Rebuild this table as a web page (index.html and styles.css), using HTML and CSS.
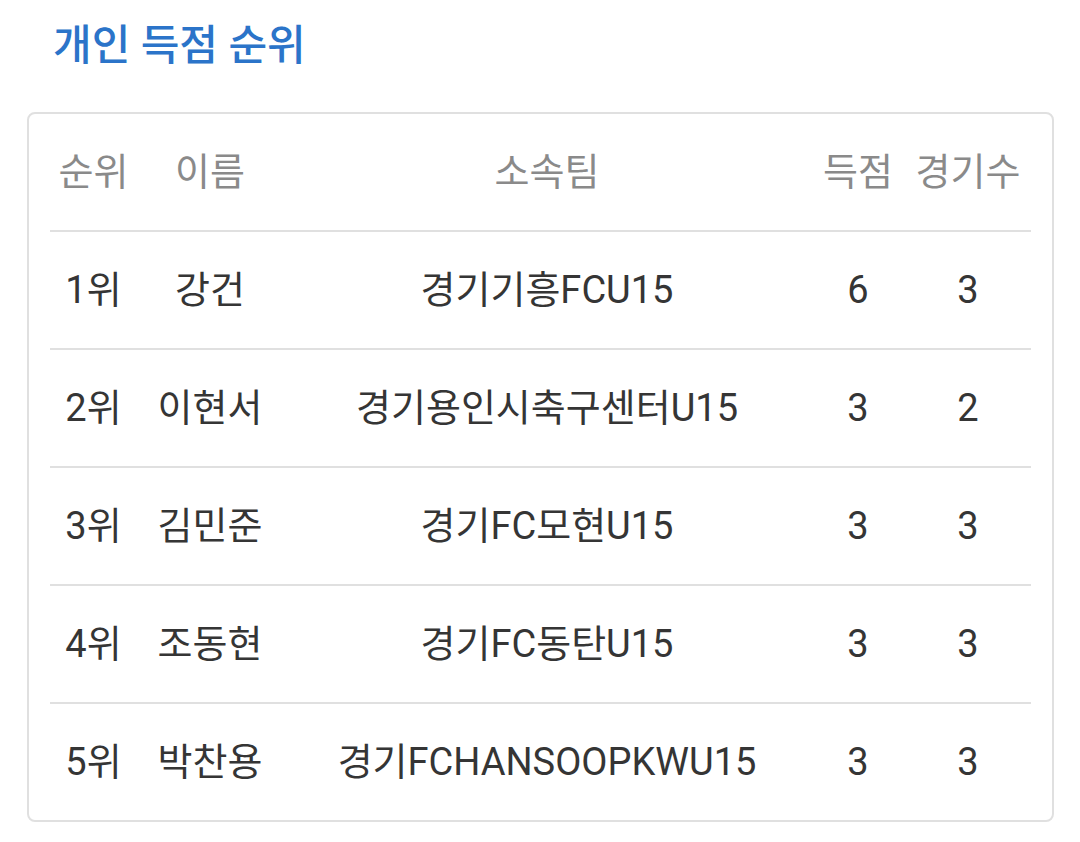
FILE: index.html
```html
<!DOCTYPE html>
<html lang="ko">
<head>
<meta charset="utf-8">
<title>개인 득점 순위</title>
<link rel="stylesheet" href="styles.css">
</head>
<body>
<h1 class="title">개인 득점 순위</h1>
<div class="card">
  <table class="rank-table">
    <colgroup>
      <col class="c-rank"><col class="c-name"><col class="c-team"><col class="c-goal"><col class="c-games">
    </colgroup>
    <thead>
      <tr><th>순위</th><th>이름</th><th>소속팀</th><th>득점</th><th>경기수</th></tr>
    </thead>
    <tbody>
      <tr><td>1위</td><td>강건</td><td>경기기흥FCU15</td><td>6</td><td>3</td></tr>
      <tr><td>2위</td><td>이현서</td><td>경기용인시축구센터U15</td><td>3</td><td>2</td></tr>
      <tr><td>3위</td><td>김민준</td><td>경기FC모현U15</td><td>3</td><td>3</td></tr>
      <tr><td>4위</td><td>조동현</td><td>경기FC동탄U15</td><td>3</td><td>3</td></tr>
      <tr><td>5위</td><td>박찬용</td><td>경기FCHANSOOPKWU15</td><td>3</td><td>3</td></tr>
    </tbody>
  </table>
</div>
</body>
</html>
```
FILE: styles.css
```css
html, body {
  margin: 0;
  padding: 0;
  background: #ffffff;
}
body {
  font-family: Roboto, "Noto Sans CJK KR", sans-serif;
  width: 1080px;
}
.title {
  margin: 0;
  padding: 23px 0 0 53px;
  height: 112px;
  box-sizing: border-box;
  font-size: 42px;
  line-height: 46px;
  font-weight: 500;
  color: #2b74c9;
}
.card {
  margin-left: 27px;
  width: 1027px;
  box-sizing: border-box;
  border: 2px solid #e0e0e0;
  border-radius: 8px;
  padding: 0 21px;
}
.rank-table {
  width: 981px;
  border-collapse: collapse;
  table-layout: fixed;
}
.c-rank { width: 87px; }
.c-name { width: 146px; }
.c-team { width: 528px; }
.c-goal { width: 94px; }
.c-games { width: 126px; }
.rank-table th,
.rank-table td {
  height: 116px;
  padding: 0;
  text-align: center;
  vertical-align: middle;
  font-size: 38px;
  font-weight: 400;
  line-height: 44px;
  white-space: nowrap;
}
.rank-table th {
  color: #8a8a8a;
}
.rank-table td {
  color: #353535;
}
.rank-table thead tr,
.rank-table tbody tr {
  border-bottom: 2px solid #e0e0e0;
}
.rank-table tbody tr:last-child {
  border-bottom: none;
}
```
